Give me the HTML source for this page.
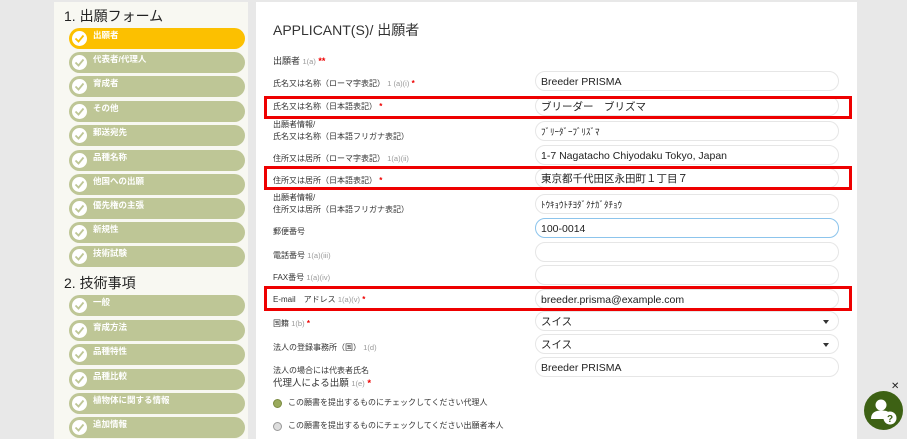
<!DOCTYPE html>
<html><head><meta charset="utf-8"><style>
*{margin:0;padding:0;box-sizing:border-box}
body{width:907px;height:439px;overflow:hidden;background:#e8e8e8;font-family:"Liberation Sans","Noto Sans CJK JP",sans-serif;position:relative;color:#333}
.side{position:absolute;left:54px;top:2px;width:194px;height:437px;background:#f8f8f2}
.main{position:absolute;left:256px;top:2px;width:601px;height:437px;background:#fff}
.h{position:absolute;left:64px;font-size:14px;color:#222}
.pill{position:absolute;left:69px;width:176px;height:21px;border-radius:11px;background:#bec696}
.pill.on{background:#fcc000}
.pill .c{position:absolute;left:3px;top:3px;width:15px;height:15px;border-radius:50%;background:#fff}
.pill .c svg{position:absolute;left:2px;top:3px}
.pill span{position:absolute;left:24px;top:1px;font-size:8.5px;font-weight:bold;color:#fff;white-space:nowrap}
.lbl{position:absolute;left:273px;font-size:8px;color:#333;white-space:nowrap;line-height:12px}
.lbl small{color:#999;font-size:7.5px}
.lbl b{color:#e00;font-weight:bold}
.in{position:absolute;left:535px;width:304px;height:20px;border:1px solid #e6e6e6;border-radius:10px;background:#fff;font-family:"Liberation Sans","Noto Sans CJK JP",sans-serif;font-size:10.5px;line-height:20px;padding-left:5px;color:#222;white-space:nowrap}
.in.f{border-color:#8cc4ec}
.sel:after{content:"";position:absolute;right:9px;top:8px;border:3.5px solid transparent;border-top:4px solid #333}
.red{position:absolute;left:264px;width:588px;border:3px solid #e00}
.rad{position:absolute;left:273px;width:9px;height:9px;border-radius:50%}
</style></head><body>
<div class="side"></div>
<div class="main"></div>
<div class="h" style="top:6px">1. 出願フォーム</div>
<div class="h" style="top:273px">2. 技術事項</div>

<div class="pill on" style="top:28px"><div class="c"><svg width="11" height="9" viewBox="0 0 11 9"><path d="M1.5 4.5l3 3 5-6" fill="none" stroke="#fcc000" stroke-width="1.8"/></svg></div><span>出願者</span></div>
<div class="pill" style="top:52px"><div class="c"><svg width="11" height="9" viewBox="0 0 11 9"><path d="M1.5 4.5l3 3 5-6" fill="none" stroke="#bec696" stroke-width="1.8"/></svg></div><span>代表者/代理人</span></div>
<div class="pill" style="top:76px"><div class="c"><svg width="11" height="9" viewBox="0 0 11 9"><path d="M1.5 4.5l3 3 5-6" fill="none" stroke="#bec696" stroke-width="1.8"/></svg></div><span>育成者</span></div>
<div class="pill" style="top:101px"><div class="c"><svg width="11" height="9" viewBox="0 0 11 9"><path d="M1.5 4.5l3 3 5-6" fill="none" stroke="#bec696" stroke-width="1.8"/></svg></div><span>その他</span></div>
<div class="pill" style="top:125px"><div class="c"><svg width="11" height="9" viewBox="0 0 11 9"><path d="M1.5 4.5l3 3 5-6" fill="none" stroke="#bec696" stroke-width="1.8"/></svg></div><span>郵送宛先</span></div>
<div class="pill" style="top:150px"><div class="c"><svg width="11" height="9" viewBox="0 0 11 9"><path d="M1.5 4.5l3 3 5-6" fill="none" stroke="#bec696" stroke-width="1.8"/></svg></div><span>品種名称</span></div>
<div class="pill" style="top:174px"><div class="c"><svg width="11" height="9" viewBox="0 0 11 9"><path d="M1.5 4.5l3 3 5-6" fill="none" stroke="#bec696" stroke-width="1.8"/></svg></div><span>他国への出願</span></div>
<div class="pill" style="top:198px"><div class="c"><svg width="11" height="9" viewBox="0 0 11 9"><path d="M1.5 4.5l3 3 5-6" fill="none" stroke="#bec696" stroke-width="1.8"/></svg></div><span>優先権の主張</span></div>
<div class="pill" style="top:222px"><div class="c"><svg width="11" height="9" viewBox="0 0 11 9"><path d="M1.5 4.5l3 3 5-6" fill="none" stroke="#bec696" stroke-width="1.8"/></svg></div><span>新規性</span></div>
<div class="pill" style="top:246px"><div class="c"><svg width="11" height="9" viewBox="0 0 11 9"><path d="M1.5 4.5l3 3 5-6" fill="none" stroke="#bec696" stroke-width="1.8"/></svg></div><span>技術試験</span></div>

<div class="pill" style="top:295px"><div class="c"><svg width="11" height="9" viewBox="0 0 11 9"><path d="M1.5 4.5l3 3 5-6" fill="none" stroke="#bec696" stroke-width="1.8"/></svg></div><span>一般</span></div>
<div class="pill" style="top:320px"><div class="c"><svg width="11" height="9" viewBox="0 0 11 9"><path d="M1.5 4.5l3 3 5-6" fill="none" stroke="#bec696" stroke-width="1.8"/></svg></div><span>育成方法</span></div>
<div class="pill" style="top:344px"><div class="c"><svg width="11" height="9" viewBox="0 0 11 9"><path d="M1.5 4.5l3 3 5-6" fill="none" stroke="#bec696" stroke-width="1.8"/></svg></div><span>品種特性</span></div>
<div class="pill" style="top:369px"><div class="c"><svg width="11" height="9" viewBox="0 0 11 9"><path d="M1.5 4.5l3 3 5-6" fill="none" stroke="#bec696" stroke-width="1.8"/></svg></div><span>品種比較</span></div>
<div class="pill" style="top:393px"><div class="c"><svg width="11" height="9" viewBox="0 0 11 9"><path d="M1.5 4.5l3 3 5-6" fill="none" stroke="#bec696" stroke-width="1.8"/></svg></div><span>植物体に関する情報</span></div>
<div class="pill" style="top:417px"><div class="c"><svg width="11" height="9" viewBox="0 0 11 9"><path d="M1.5 4.5l3 3 5-6" fill="none" stroke="#bec696" stroke-width="1.8"/></svg></div><span>追加情報</span></div>

<div style="position:absolute;left:273px;top:20px;font-size:14px;color:#333">APPLICANT(S)/ 出願者</div>
<div class="lbl" style="top:55px;font-size:9px">出願者 <small>1(a)</small> <b>**</b></div>
<div class="lbl" style="top:78px">氏名又は名称（ローマ字表記） <small>1 (a)(i)</small> <b>*</b></div>
<div class="lbl" style="top:101px">氏名又は名称（日本語表記） <b>*</b></div>
<div class="lbl" style="top:119px">出願者情報/<br>氏名又は名称（日本語フリガナ表記）</div>
<div class="lbl" style="top:153px">住所又は居所（ローマ字表記） <small>1(a)(ii)</small></div>
<div class="lbl" style="top:175px">住所又は居所（日本語表記） <b>*</b></div>
<div class="lbl" style="top:192px">出願者情報/<br>住所又は居所（日本語フリガナ表記）</div>
<div class="lbl" style="top:226px">郵便番号</div>
<div class="lbl" style="top:250px">電話番号 <small>1(a)(iii)</small></div>
<div class="lbl" style="top:272px">FAX番号 <small>1(a)(iv)</small></div>
<div class="lbl" style="top:294px">E-mail　アドレス <small>1(a)(v)</small> <b>*</b></div>
<div class="lbl" style="top:318px">国籍 <small>1(b)</small> <b>*</b></div>
<div class="lbl" style="top:342px">法人の登録事務所（国） <small>1(d)</small></div>
<div class="lbl" style="top:365px">法人の場合には代表者氏名</div>
<div class="lbl" style="top:378px;font-size:9.5px">代理人による出願 <small>1(e)</small> <b>*</b></div>
<div class="rad" style="top:399px;background:#9aaa5c;border:1px solid #7a8a40"></div>
<div class="lbl" style="left:288px;top:397px">この願書を提出するものにチェックしてください代理人</div>
<div class="rad" style="top:422px;background:#ddd;border:1px solid #999"></div>
<div class="lbl" style="left:288px;top:420px">この願書を提出するものにチェックしてください出願者本人</div>

<div class="in" style="top:71px">Breeder PRISMA</div>
<div class="in" style="top:96px">ブリーダー　ブリズマ</div>
<div class="in" style="top:121px;font-size:9px">ﾌﾞﾘｰﾀﾞｰﾌﾞﾘｽﾞﾏ</div>
<div class="in" style="top:145px">1-7 Nagatacho Chiyodaku Tokyo, Japan</div>
<div class="in" style="top:168px">東京都千代田区永田町１丁目７</div>
<div class="in" style="top:194px;font-size:9px">ﾄｳｷｮｳﾄﾁﾖﾀﾞｸﾅｶﾞﾀﾁｮｳ</div>
<div class="in f" style="top:218px">100-0014</div>
<div class="in" style="top:242px"></div>
<div class="in" style="top:265px"></div>
<div class="in" style="top:289px">breeder.prisma@example.com</div>
<div class="in sel" style="top:311px">スイス</div>
<div class="in sel" style="top:334px">スイス</div>
<div class="in" style="top:357px">Breeder PRISMA</div>

<div class="red" style="top:96px;height:23px"></div>
<div class="red" style="top:166px;height:24px"></div>
<div class="red" style="top:286px;height:25px"></div>

<div style="position:absolute;left:891px;top:381px;font-size:10px;color:#222">✕</div>
<div style="position:absolute;left:864px;top:391px;width:39px;height:39px;border-radius:50%;background:#3d6114">
<svg width="39" height="39" viewBox="0 0 39 39"><circle cx="17" cy="14" r="5.5" fill="#fff"/><path d="M7 28c0-6 4-8.5 10-8.5s7 1 8.5 3l0 5.5z" fill="#fff"/><circle cx="26" cy="27" r="6.5" fill="#fff"/><text x="26" y="31" font-size="10" font-weight="bold" text-anchor="middle" fill="#3d6114" font-family="Liberation Sans">?</text></svg></div>
</body></html>
